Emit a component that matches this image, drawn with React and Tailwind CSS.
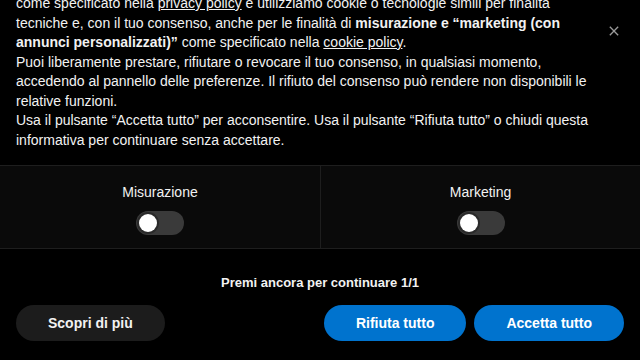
import { useEffect, useRef } from "react";

function Toggle() {
  return (
    <button className="relative flex h-6 w-12 items-center rounded-full bg-[#3a3a3a] px-[3px]">
      <span className="h-[18px] w-[18px] rounded-full bg-white ring-2 ring-[#2a2a2a]" />
    </button>
  );
}

export default function App() {
  const scrollRef = useRef(null);

  useEffect(() => {
    // the banner text is scrolled a bit, like in the capture
    if (scrollRef.current) scrollRef.current.scrollTop = 46;
  }, []);

  return (
    <div
      className="relative flex h-[360px] w-[640px] flex-col overflow-hidden bg-black text-[#f2f2f2]"
      style={{ fontFamily: '"Liberation Sans", Arial, sans-serif' }}
    >
      <button className="absolute right-[20px] top-[25px] flex h-3 w-3 items-center justify-center text-[#9a9a9a]">
        <svg viewBox="0 0 12 12" className="h-[10px] w-[10px]" fill="none" stroke="currentColor" strokeWidth="1.6">
          <path d="M1 1l10 10M11 1L1 11" />
        </svg>
      </button>

      <div ref={scrollRef} className="h-[150px] shrink-0 overflow-hidden pl-4 pr-[40px] text-[14px] leading-[19.5px]">
        <p>
          Noi e terze parti selezionate raccogliamo e trattiamo i tuoi dati personali
          <br />
          per finalità tecniche e di sicurezza del sito, sempre e solo
          <br />
          come specificato nella <a className="underline">privacy policy</a> e utilizziamo cookie o tecnologie simili per finalità
          tecniche e, con il tuo consenso, anche per le finalità di <b>misurazione e “marketing (con annunci personalizzati)”</b> come specificato nella <a className="underline">cookie policy</a>.
        </p>
        <p>
          Puoi liberamente prestare, rifiutare o revocare il tuo consenso, in qualsiasi momento, accedendo al pannello delle preferenze. Il rifiuto del consenso può rendere non disponibili le relative funzioni.
        </p>
        <p>
          Usa il pulsante “Accetta tutto” per acconsentire. Usa il pulsante “Rifiuta tutto” o chiudi questa informativa per continuare senza accettare.
        </p>
      </div>

      <div className="mt-[15px] grid grid-cols-2 border-y border-[#1e1e1e] bg-[#0a0a0a]">
        <div className="flex flex-col items-center pb-[13px] pt-[16px]">
          <span className="text-[14px] leading-5">Misurazione</span>
          <div className="mt-[9px]">
            <Toggle />
          </div>
        </div>
        <div className="flex flex-col items-center border-l border-[#1e1e1e] pb-[13px] pt-[16px]">
          <span className="text-[14px] leading-5">Marketing</span>
          <div className="mt-[9px]">
            <Toggle />
          </div>
        </div>
      </div>

      <div className="mt-[26px] text-center text-[13px] font-bold leading-4">Premi ancora per continuare 1/1</div>

      <div className="mt-[14px] flex items-center px-4">
        <button className="h-9 rounded-full bg-[#1c1c1c] px-8 text-[14px] font-bold">Scopri di più</button>
        <div className="ml-auto flex gap-2">
          <button className="h-9 rounded-full bg-[#0073ce] px-8 text-[14px] font-bold text-white">Rifiuta tutto</button>
          <button className="h-9 rounded-full bg-[#0073ce] px-8 text-[14px] font-bold text-white">Accetta tutto</button>
        </div>
      </div>
    </div>
  );
}
